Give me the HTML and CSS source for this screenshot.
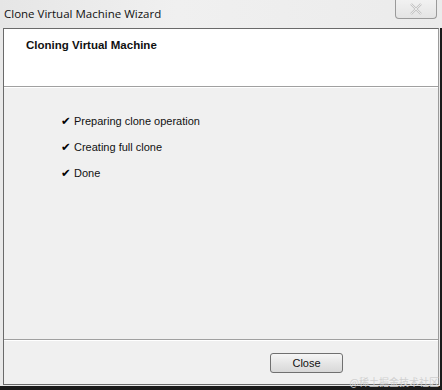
FILE: index.html
```html
<!DOCTYPE html>
<html>
<head>
<meta charset="utf-8">
<link rel="stylesheet" href="styles.css">
</head>
<body>
<div class="window">
  <div class="titlebar">
    <span class="title">Clone Virtual Machine Wizard</span>
    <div class="close-x">
      <svg width="14" height="12" viewBox="0 0 14 12"><path d="M2 1 L12 11 M12 1 L2 11" stroke="#c4c4c4" stroke-width="2.4" fill="none"/><path d="M2 1 L12 11 M12 1 L2 11" stroke="#f4f4f4" stroke-width="0.8" fill="none"/></svg>
    </div>
  </div>
  <div class="lower">
    <div class="client">
      <div class="header">
        <span class="heading">Cloning Virtual Machine</span>
      </div>
      <div class="content">
        <div class="row"><span class="check">✔</span><span>Preparing clone operation</span></div>
        <div class="row"><span class="check">✔</span><span>Creating full clone</span></div>
        <div class="row"><span class="check">✔</span><span>Done</span></div>
      </div>
      <div class="footer">
        <button class="btn">Close</button>
      </div>
    </div>
  </div>
  <div class="watermark">@稀土掘金技术社区</div>
</div>
</body>
</html>
```

FILE: styles.css
```css
html, body {
  margin: 0;
  padding: 0;
  background: #ffffff;
}
.window {
  position: relative;
  width: 442px;
  height: 390px;
  display: flex;
  flex-direction: column;
  background: #e9e9e9;
  box-sizing: border-box;
  overflow: hidden;
}
.titlebar {
  height: 28px;
  display: flex;
  align-items: flex-start;
  padding-left: 4px;
  background: linear-gradient(to right, #e6e6e6, #f0f0f0 40%, #ebebeb);
}
.title {
  font-family: "Open Sans", "Noto Sans", sans-serif;
  font-size: 11.5px;
  line-height: 28px;
  color: #111;
}
.close-x {
  margin-left: auto;
  margin-right: 5px;
  margin-top: -1px;
  width: 42px;
  height: 20px;
  border: 1px solid #9a9a9a;
  border-top: none;
  border-radius: 0 0 4px 4px;
  background: linear-gradient(#f2f2f2, #e4e4e4);
  box-sizing: border-box;
  display: flex;
  align-items: center;
  justify-content: center;
}
.lower {
  flex: 1;
  display: flex;
  padding-left: 3px;
  padding-right: 1px;
  padding-bottom: 1px;
  border-right: 2px solid #1a1a1a;
  border-bottom: 4px solid #1a1a1a;
}
.client {
  flex: 1;
  display: flex;
  flex-direction: column;
  border-left: 1px solid #6a6a6a;
  border-top: 1px solid #6a6a6a;
  border-right: 1px solid #9a9a9a;
  border-bottom: 1px solid #6a6a6a;
  background: #f0f0f0;
  font-family: "Liberation Sans", Arial, sans-serif;
  font-size: 11px;
  color: #111;
}
.header {
  height: 58px;
  background: #ffffff;
  padding: 9px 0 0 22px;
  box-sizing: border-box;
  border-bottom: 1px solid #a0a0a0;
}
.heading {
  font-weight: bold;
  font-size: 11.5px;
  line-height: 14px;
}
.content {
  flex: 1;
  border-top: 1px solid #ffffff;
  border-bottom: 1px solid #a0a0a0;
  padding: 26px 0 0 57px;
  display: flex;
  flex-direction: column;
  gap: 12px;
}
.row {
  display: flex;
  align-items: center;
  line-height: 14px;
  height: 14px;
}
.check {
  width: 13px;
  font-family: "DejaVu Sans", sans-serif;
  font-size: 11.5px;
  color: #000;
}
.footer {
  height: 44px;
  border-top: 1px solid #ffffff;
  box-sizing: border-box;
  display: flex;
  justify-content: flex-end;
  align-items: flex-start;
  padding: 12px 95px 0 0;
}
.btn {
  width: 73px;
  height: 20px;
  border: 1px solid #707070;
  border-radius: 3px;
  background: linear-gradient(#f6f6f6, #e6e6e6 50%, #d8d8d8);
  font-family: "Liberation Sans", Arial, sans-serif;
  font-size: 11px;
  color: #111;
  padding: 0;
}
.watermark {
  position: absolute;
  right: 3px;
  bottom: 2px;
  font-family: "Noto Sans CJK SC", sans-serif;
  font-size: 10px;
  line-height: 12px;
  color: #d0d0d0;
}
```
